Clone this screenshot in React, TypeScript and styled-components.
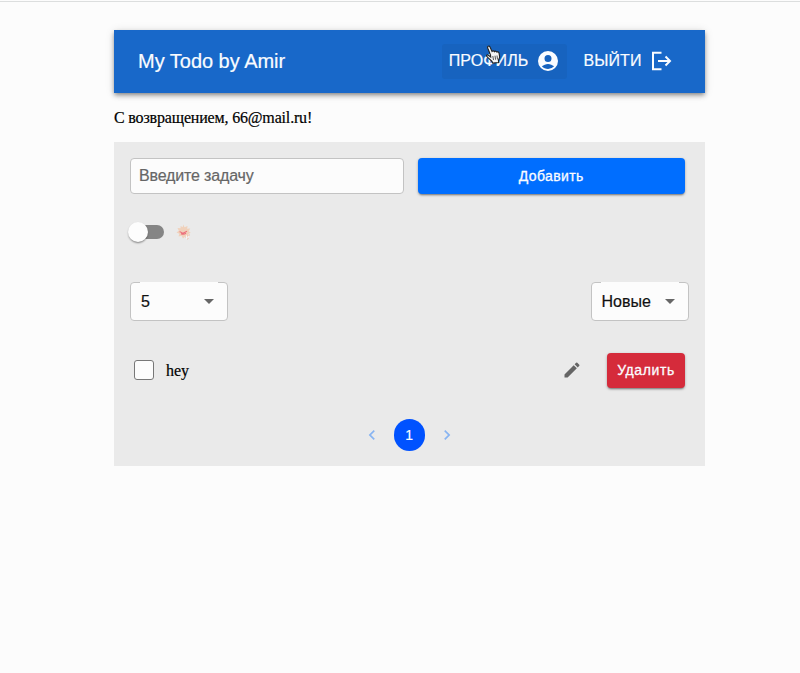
import React from "react";
import styled, { createGlobalStyle } from "styled-components";

const GlobalStyle = createGlobalStyle`
  * { box-sizing: border-box; }
  body { margin: 0; background: #fcfcfc; font-family: "Liberation Sans", Arial, sans-serif; color: #111; }
`;

const Page = styled.div`
  height: 673px;
  overflow: hidden;
  border-top: 1px solid #fcfcfc;
  box-shadow: inset 0 1px 0 #dcdede;
  padding: 29px 95.5px 0 114px;
`;

const Header = styled.header`
  display: flex;
  align-items: center;
  height: 63px;
  padding: 0 26px 1px 24px;
  background: #1868c9;
  color: #fafcff;
  box-shadow: 0 2px 4px -1px rgba(0, 0, 0, 0.3), 0 3px 5px rgba(0, 0, 0, 0.2), 0 1px 9px rgba(0, 0, 0, 0.12);
`;

const Title = styled.h1`
  flex: 1;
  margin: 0;
  font-size: 20px;
  font-weight: 400;
  line-height: 30px;
  letter-spacing: -0.02px;
  -webkit-text-stroke: 0.2px;
`;

const NavButton = styled.button<{ $hovered?: boolean }>`
  position: relative;
  display: flex;
  align-items: center;
  gap: 8px;
  height: 35px;
  margin-left: 9px;
  padding: 0 7px;
  border: 0;
  border-radius: 3px;
  background: ${(p) => (p.$hovered ? "#1763bf" : "transparent")};
  color: inherit;
  font: 400 16px/24px "Liberation Sans", Arial, sans-serif;
  letter-spacing: 0.1px;
  -webkit-text-stroke: 0.2px;
`;

const Cursor = styled.svg`
  position: absolute;
  left: 43px;
  top: 1px;
`;

const Greeting = styled.p`
  margin: 0;
  height: 49px;
  font: 400 16px/49px "Liberation Serif", "Times New Roman", serif;
  letter-spacing: -0.17px;
  -webkit-text-stroke: 0.2px;
  color: #000;
`;

const Panel = styled.main`
  height: 324px;
  padding: 16px 16px 0;
  background: #eaeaea;
`;

const AddRow = styled.form`
  display: grid;
  grid-template-columns: 274px 267.5px;
  gap: 13.5px;
  height: 36px;
`;

const TaskInput = styled.input`
  min-width: 0;
  padding: 0 8px;
  border: 1px solid #c3c3c3;
  border-radius: 4px;
  background: #fcfcfc;
  font: 400 16px "Liberation Sans", Arial, sans-serif;
  letter-spacing: -0.15px;
  &::placeholder { color: #666; opacity: 1; -webkit-text-stroke: 0.2px; }
`;

const ActionButton = styled.button<{ $danger?: boolean }>`
  width: ${(p) => (p.$danger ? "78px" : "auto")};
  height: ${(p) => (p.$danger ? "35px" : "36px")};
  padding: ${(p) => (p.$danger ? "0 0 1px" : "0")};
  border: 0;
  border-radius: 4px;
  background: ${(p) => (p.$danger ? "#d52b3b" : "#006eff")};
  color: #fafcff;
  font: 400 14px "Liberation Sans", Arial, sans-serif;
  letter-spacing: ${(p) => (p.$danger ? "0.6px" : "0.4px")};
  -webkit-text-stroke: 0.3px;
  box-shadow: 0 2px 2px -1px rgba(0, 0, 0, 0.35), 0 1px 3px rgba(0, 0, 0, 0.25);
`;

const ThemeRow = styled.div`
  display: flex;
  align-items: center;
  gap: 12px;
  height: 20px;
  margin-top: 28px;
`;

const Track = styled.div`
  display: flex;
  align-items: center;
  width: 34px;
  height: 14px;
  border-radius: 7px;
  background: #858585;
`;

const Thumb = styled.span`
  width: 20px;
  height: 20px;
  margin-left: -2px;
  border-radius: 50%;
  background: #fdfdfd;
  box-shadow: 0 2px 2px -1px rgba(0, 0, 0, 0.3), 0 1px 2px rgba(0, 0, 0, 0.2);
`;

const FilterRow = styled.div`
  display: flex;
  justify-content: space-between;
  margin: 40px 0 0;
`;

const SelectBox = styled.div`
  position: relative;
  display: flex;
  align-items: center;
  justify-content: space-between;
  width: 98px;
  height: 39px;
  padding: 0 13px 0 10px;
  border: 1px solid #c3c3c3;
  border-radius: 4px;
  background: #fcfcfc;
  font-size: 16px;
  -webkit-text-stroke: 0.2px;
  &::before {
    content: "";
    position: absolute;
    left: 9px;
    right: 9px;
    top: -1px;
    height: 1px;
    background: #fcfcfc;
  }
`;

const Caret = styled.span`
  border: 5px solid transparent;
  border-top-color: #666;
  border-bottom: 0;
`;

const TaskRow = styled.div`
  display: flex;
  align-items: center;
  height: 35px;
  margin: 32px 3.5px 0 4px;
`;

const Check = styled.span`
  width: 20px;
  height: 20px;
  margin-bottom: 1px;
  border: 1px solid #777;
  border-radius: 3px;
  background: #fcfcfc;
`;

const TaskName = styled.span`
  flex: 1;
  margin-left: 12px;
  font: 400 16px/20px "Liberation Serif", "Times New Roman", serif;
  -webkit-text-stroke: 0.2px;
  color: #000;
`;

const EditIcon = styled.svg`
  margin: 0 25px 1px 0;
`;

const Pager = styled.nav`
  display: flex;
  align-items: center;
  justify-content: center;
  gap: 12px;
  height: 32px;
  margin-top: 31px;
`;

const PageNumber = styled.span`
  width: 31.5px;
  height: 31.5px;
  border-radius: 50%;
  background: #0052ff;
  color: #fafcff;
  font-size: 14px;
  line-height: 32px;
  text-align: center;
  -webkit-text-stroke: 0.2px;
`;

const Arrow = ({ d }: { d: string }) => (
  <svg width="20" height="20" viewBox="0 0 24 24" fill="#88b4f2"><path d={d} /></svg>
);

const Sun = () => (
  <svg width="16" height="16" viewBox="0 0 16 16">
    <path d="m7.200.5 1.300 2.700L11.500 2l-.3 2.700 3-.2-1.500 2.800 2 1.500-2.300 1.200.5 2.200-3-.4L7 14.500l-1.500-2.800-3 .7.800-2.600L.5 8.500l2.300-1.800L1.500 4l3 .3L4.700 2l2 1.200z" fill="#f0d1bb" />
    <path d="M3.500 7.700c1.200 0 1.800.6 2.300 1 .7.5 1.500.5 2.200 0L11 7.200M5 9.700c1.500.8 3.500.6 5-.4" stroke="#ec6f7b" strokeWidth="1.100" fill="none" />
    <path d="M9 13h1m1-1h1m0 2h1m0-3h1m-3 4h1" stroke="#f5bfa8" />
    <path d="M10 12h1m1 1h1m-3 1h1" stroke="#fff" />
  </svg>
);

export default function App() {
  return (
    <>
      <GlobalStyle />
      <Page>
        <Header>
          <Title>My Todo by Amir</Title>
          <NavButton $hovered>
            ПРОФИЛЬ
            <svg width="24" height="24" viewBox="0 0 24 24" fill="currentColor">
              <path d="M12 2a10 10 0 1 0 0 20 10 10 0 0 0 0-20zm0 4a3.500 3.500 0 1 1 0 7 3.500 3.500 0 0 1 0-7zm0 14c-2.400 0-4.600-1-6.100-2.700C7.600 16 9.700 15 12 15s4.400 1 6.100 2.300A8 8 0 0 1 12 20z" />
            </svg>
            <Cursor width="16" height="19" viewBox="0 0 16 19">
              <path d="M5.500 10 2.800 3.200C2 1 4.200.300 5 2l2 4.500c.700-1 2-.800 2.500.200.800-.900 2-.600 2.400.400 1.100-.600 2 .100 2.200 1.300l.6 3.800-1.300 3.200.3 2.100-6 .6-.7-1.800-4.300-4C.500 10.600 2 9.300 3.400 10.200L5.700 12z" fill="#f5f5f5" stroke="#222" strokeWidth="1.100" />
              <path d="m7.800 11 .7 4m1.500-4.300.6 4M12 10.500l.5 4" stroke="#555" />
            </Cursor>
          </NavButton>
          <NavButton>
            ВЫЙТИ
            <svg width="22" height="22" viewBox="0 0 22 22" fill="none" stroke="currentColor" strokeWidth="2">
              <path d="M11.500 2.800H3v16.400h8.500M8 11h12M15.500 6.500 20 11l-4.500 4.500" />
            </svg>
          </NavButton>
        </Header>
        <Greeting>С возвращением, 66@mail.ru!</Greeting>
        <Panel>
          <AddRow>
            <TaskInput placeholder="Введите задачу" />
            <ActionButton type="button">Добавить</ActionButton>
          </AddRow>
          <ThemeRow>
            <Track><Thumb /></Track>
            <Sun />
          </ThemeRow>
          <FilterRow>
            <SelectBox>5<Caret /></SelectBox>
            <SelectBox>Новые<Caret /></SelectBox>
          </FilterRow>
          <TaskRow>
            <Check />
            <TaskName>hey</TaskName>
            <EditIcon width="20" height="20" viewBox="0 0 24 24" fill="#656565">
              <path d="M3 17.250V21h3.750L17.810 9.940l-3.750-3.750zM20.710 7.040a1 1 0 0 0 0-1.410l-2.340-2.340a1 1 0 0 0-1.410 0l-1.830 1.830 3.750 3.750z" />
            </EditIcon>
            <ActionButton $danger>Удалить</ActionButton>
          </TaskRow>
          <Pager>
            <Arrow d="M15.410 7.410 14 6l-6 6 6 6 1.410-1.410L10.830 12z" />
            <PageNumber>1</PageNumber>
            <Arrow d="M10 6 8.590 7.410 13.170 12l-4.580 4.590L10 18l6-6z" />
          </Pager>
        </Panel>
      </Page>
    </>
  );
}
